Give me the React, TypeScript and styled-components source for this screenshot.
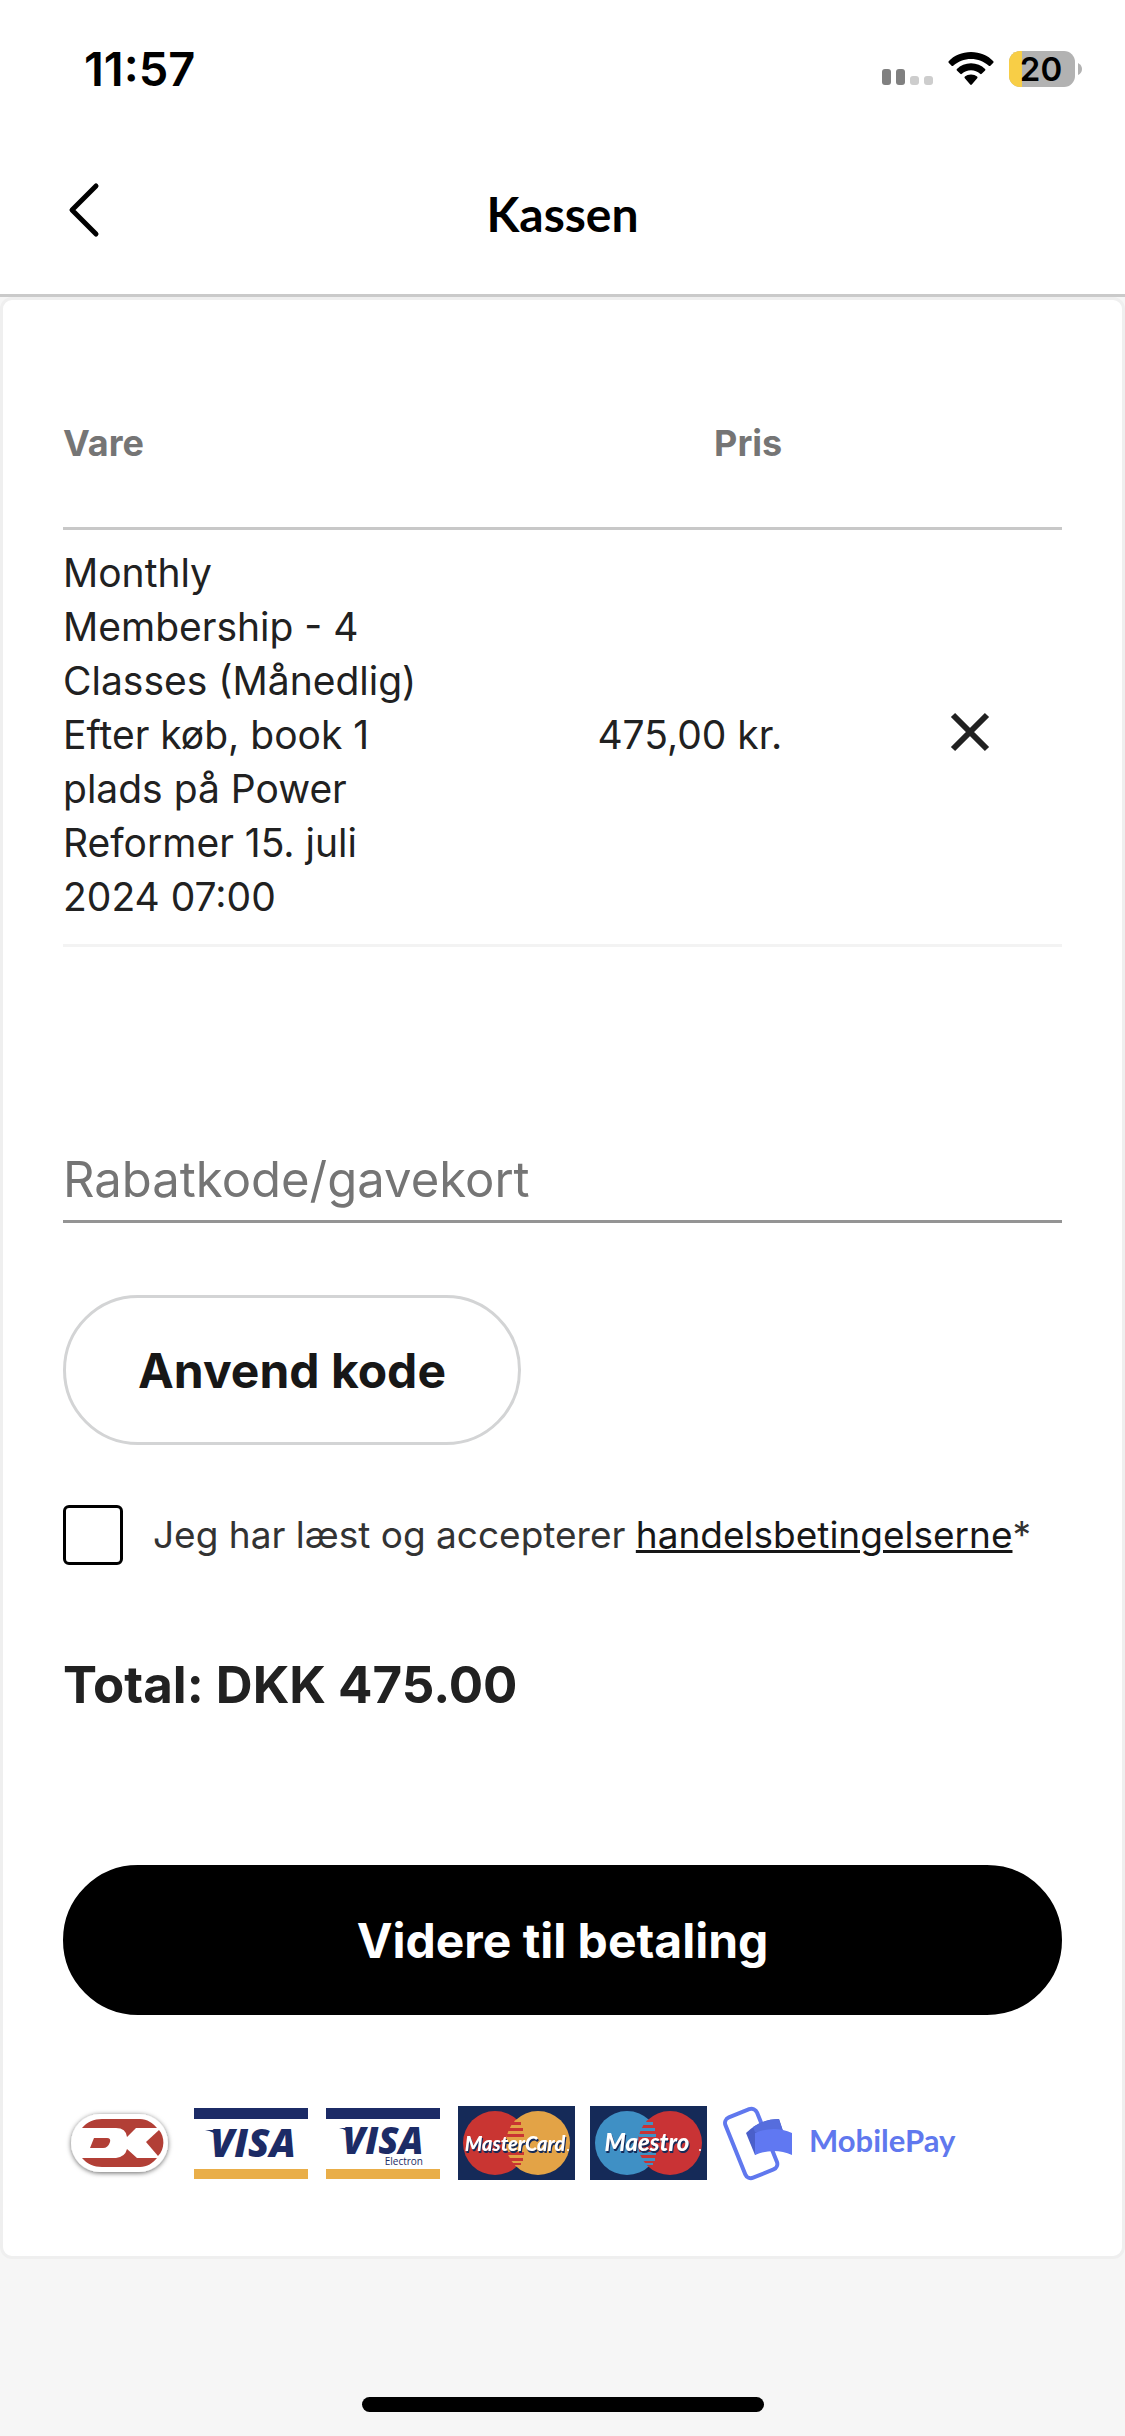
import React, { useState } from "react";
import styled, { createGlobalStyle } from "styled-components";

const GlobalStyle = createGlobalStyle`
  *, *::before, *::after { box-sizing: border-box; }
  body {
    margin: 0;
    background: #f6f6f6;
    color: #212121;
    font-family: Inter, "Liberation Sans", sans-serif;
  }
`;

const Page = styled.div`
  min-height: 100vh;
  display: flex;
  flex-direction: column;
`;

const Header = styled.header`
  background: #fff;
  border-bottom: 3px solid #cacaca;
`;

const StatusBar = styled.div`
  display: flex;
  align-items: center;
  justify-content: space-between;
  height: 138px;
  padding: 0 43px 0 84px;
  color: #000;
`;

const Time = styled.time`
  font-size: 47px;
  line-height: 52px;
  font-weight: 600;
`;

const StatusIcons = styled.div`
  display: flex;
  align-items: center;
  gap: 15px;
`;

const NavBar = styled.nav`
  display: grid;
  grid-template-columns: 1fr auto 1fr;
  align-items: start;
  padding: 40px 60px 44px;
  color: #000;
`;

const BackButton = styled.button`
  display: flex;
  justify-self: start;
  padding: 4px 6px;
  border: 0;
  background: none;
  color: inherit;
`;

const Title = styled.h1`
  margin: 0;
  font-family: Lato, "Liberation Sans", sans-serif;
  font-size: 48px;
  line-height: 72px;
  font-weight: 700;
`;

const Card = styled.main`
  padding: 98px 60px 75px;
  background: #fff;
  border: 3px solid #efefef;
  border-radius: 12px;
`;

const CartTable = styled.table`
  width: 100%;
  border-collapse: collapse;
  table-layout: fixed;
`;

const HeadCell = styled.th<{ $width: string; $end?: boolean }>`
  width: ${(p) => p.$width};
  padding: 18px 0 57px;
  border-bottom: 3px solid #c8c8c8;
  color: #757575;
  font-size: 36px;
  line-height: 54px;
  font-weight: 700;
  text-align: ${(p) => (p.$end ? "right" : "left")};
`;

const Cell = styled.td<{ $end?: boolean }>`
  padding: 16px 0 20px;
  border-bottom: 3px solid #f3f3f3;
  font-size: 39px;
  line-height: 54px;
  text-align: ${(p) => (p.$end ? "right" : "left")};
`;

const RemoveButton = styled.button`
  display: flex;
  margin: 0 69px 0 auto;
  padding: 0;
  border: 0;
  background: none;
  color: #212121;
`;

const DiscountForm = styled.form`
  display: flex;
  flex-direction: column;
  align-items: flex-start;
  gap: 72px;
  margin-top: 192px;
`;

const CodeInput = styled.input`
  width: 100%;
  height: 84px;
  padding: 0;
  border: 0;
  border-bottom: 3px solid #949494;
  border-radius: 0;
  background: none;
  color: #212121;
  font-family: inherit;
  font-size: 49px;

  &::placeholder {
    color: #757575;
    opacity: 1;
  }
`;

const PillButton = styled.button<{ $primary?: boolean }>`
  width: ${(p) => (p.$primary ? "100%" : "auto")};
  height: 150px;
  padding: 0 72px;
  border: 3px solid ${(p) => (p.$primary ? "#000" : "#d3d4d5")};
  border-radius: 75px;
  background: ${(p) => (p.$primary ? "#000" : "#fff")};
  color: ${(p) => (p.$primary ? "#fff" : "#171717")};
  font-family: inherit;
  font-size: 48px;
  font-weight: 700;
`;

const Terms = styled.div`
  display: flex;
  align-items: center;
  gap: 30px;
  margin-top: 60px;
`;

const Checkbox = styled.input`
  appearance: none;
  flex: none;
  width: 60px;
  height: 60px;
  margin: 0;
  border: 3px solid #000;
  border-radius: 6px;
  background: #fff;

  &:checked {
    background: #000;
    box-shadow: inset 0 0 0 9px #fff;
  }
`;

const TermsLabel = styled.label`
  color: #333;
  font-size: 37px;
  line-height: 54px;
`;

const TermsLink = styled.a`
  color: #171717;
  text-decoration-thickness: 3px;
`;

const Total = styled.p`
  margin: 84px 0 144px;
  font-size: 51px;
  line-height: 72px;
  font-weight: 700;
`;

const Logos = styled.ul`
  display: flex;
  align-items: center;
  gap: 15px;
  margin: 90px 0 0;
  padding: 0;
  list-style: none;
`;

const LogoItem = styled.li`
  display: flex;
`;

const BrandName = styled.text`
  font-family: Lato, "Liberation Sans", sans-serif;
  font-weight: 900;
  font-style: italic;
  fill: #fff;
  filter: drop-shadow(1px 2px 0 #152a58);
`;

const HomeIndicator = styled.div`
  width: 402px;
  height: 15px;
  margin: auto auto 24px;
  border-radius: 8px;
  background: #000;
`;

const Signal = () => (
  <svg width="51" height="34" viewBox="0 0 51 34" aria-hidden="true">
    <rect x="0" y="17" width="9" height="16" rx="3" fill="#808080" />
    <rect x="14" y="17" width="9" height="16" rx="3" fill="#808080" />
    <rect x="28" y="24" width="9" height="9" rx="3" fill="#cdcdcd" />
    <rect x="42" y="24" width="9" height="9" rx="3" fill="#cdcdcd" />
  </svg>
);

const Wifi = () => (
  <svg width="46" height="34" viewBox="0 0 46 34" aria-hidden="true">
    <path d="M23 0C14 0 6 3.500 .7 9.200Q0 10 .7 10.800L3.600 13.700Q4.400 14.400 5.200 13.700C10 9.300 16.200 6.900 23 6.900S36 9.300 40.800 13.700Q41.600 14.400 42.400 13.700L45.300 10.800Q46 10 45.300 9.200C40 3.500 32 0 23 0Z" />
    <path d="M23 11.200C17.500 11.200 12.500 13.300 8.900 16.900Q8.200 17.700 8.900 18.500L12.300 21.800Q13.100 22.500 13.900 21.800C16.400 19.600 19.500 18.200 23 18.200S29.600 19.600 32.100 21.800Q32.900 22.500 33.700 21.800L37.100 18.500Q37.800 17.700 37.100 16.900C33.500 13.300 28.500 11.200 23 11.200Z" />
    <path d="M23 22.500C20.500 22.500 18.500 23.300 16.900 24.600Q16 25.400 16.800 26.200L22.200 32.500Q23 33.300 23.800 32.500L29.200 26.200Q30 25.400 29.100 24.600C27.500 23.300 25.500 22.500 23 22.500Z" />
  </svg>
);

const Battery = () => (
  <svg width="73" height="48" viewBox="0 -6 73 48" role="img" aria-label="20 procent">
    <clipPath id="cell">
      <rect width="66" height="36" rx="11" />
    </clipPath>
    <g clipPath="url(#cell)">
      <rect width="66" height="36" fill="#b2b2b2" />
      <rect width="13" height="36" fill="#f8ce46" />
    </g>
    <path d="M69 12Q73 14 73 18T69 24Z" fill="#b2b2b2" />
    <text x="32" y="30" textAnchor="middle" fontFamily="Inter, sans-serif" fontSize="33" fontWeight="600">
      20
    </text>
  </svg>
);

const Dankort = () => (
  <svg width="116" height="76" viewBox="0 0 116 76" role="img" aria-label="Dankort">
    <defs>
      <filter id="halo" x="-20%" y="-20%" width="140%" height="140%">
        <feDropShadow dx="0" dy="1" stdDeviation="2.500" floodColor="#000" floodOpacity=".6" />
      </filter>
    </defs>
    <rect x="8" y="9" width="97" height="58" rx="29" fill="#fff" filter="url(#halo)" />
    <g fill="#b23f36">
      <path d="M19 23C24 17 31 14 39 14H77C84 14 90 18 94 23H73L64 32Q63 23 53 23Z" />
      <path d="M19 53H53Q62 52 64 44L74 53H94C90 58 84 62 77 62H39C31 62 24 59 19 53Z" />
      <path d="M31 33H44Q48 33 47 37Q45 43 40 43H27Z" />
      <path d="M96 25C102 32 102 44 95 51L83 37Z" />
    </g>
  </svg>
);

const logoFont = '"Open Sans", "Noto Sans", sans-serif';

const Visa = ({ electron }: { electron?: boolean }) => (
  <svg
    width="117"
    height="76"
    viewBox="0 0 117 76"
    role="img"
    aria-label={electron ? "Visa Electron" : "Visa"}
  >
    <rect y="3" width="114" height="11" fill="#1c2b66" />
    <rect y="64" width="114" height="10" fill="#e9ae49" />
    <text
      x={electron ? 57 : 59}
      y={electron ? 49 : 52}
      textAnchor="middle"
      fontFamily={logoFont}
      fontSize={electron ? 37 : 39}
      fontWeight="800"
      fontStyle="italic"
      fill="#1c2b66"
    >
      VISA
    </text>
    <path d={electron ? "M13 23H25L26 32Q21 24 13 23Z" : "M11 25H25L26 34Q20 26 11 25Z"} fill="#1c2b66" />
    {electron && (
      <text x="97" y="60" textAnchor="end" fontFamily={logoFont} fontSize="10" fill="#1c2b66">
        Electron
      </text>
    )}
  </svg>
);

interface CirclesProps {
  name: string;
  left: string;
  right: string;
  stripes: string;
  size: number;
}

const CirclesCard = ({ name, left, right, stripes, size }: CirclesProps) => (
  <svg width="117" height="76" viewBox="0 0 117 76" role="img" aria-label={name}>
    <rect y="1" width="117" height="74" fill="#152a58" />
    <circle cx="37" cy="38" r="32" fill={left} />
    <circle cx="80" cy="38" r="32" fill={right} />
    <g fill={stripes}>
      <rect x="53" y="17" width="10" height="3" />
      <rect x="50" y="23" width="15" height="3" />
      <rect x="49" y="29" width="17" height="3" />
      <rect x="49" y="47" width="17" height="3" />
      <rect x="50" y="53" width="15" height="3" />
      <rect x="53" y="58" width="10" height="2" />
    </g>
    <BrandName x="57" y="46" textAnchor="middle" fontSize={size}>{name}</BrandName>
    <circle cx="110" cy="45" r="1" fill="#fff" />
  </svg>
);

const MobilePay = () => (
  <svg width="240" height="76" viewBox="0 0 240 76" role="img" aria-label="MobilePay">
    <rect
      x="12"
      y="6"
      width="34"
      height="65"
      rx="6"
      transform="rotate(-22 29 38)"
      fill="#fff"
      stroke="#6078ee"
      strokeWidth="4"
    />
    <path d="M24 28Q38 14 57 14L62 29L33 50Z" fill="#4a5fca" />
    <path d="M31 22Q43 14 57 14L62 29L33 27Z" fill="#566ddd" />
    <path d="M33 28Q52 20 70 28V50Q52 42 33 50Z" fill="#6078f2" />
    <text x="87" y="47" fontFamily={'Lato, "Liberation Sans", sans-serif'} fontSize="31" fontWeight="700" fill="#6078ee">
      MobilePay
    </text>
  </svg>
);

export default function App() {
  const [code, setCode] = useState("");
  const [accepted, setAccepted] = useState(false);

  return (
    <>
      <GlobalStyle />
      <Page>
        <Header>
          <StatusBar>
            <Time>11:57</Time>
            <StatusIcons>
              <Signal />
              <Wifi />
              <Battery />
            </StatusIcons>
          </StatusBar>
          <NavBar>
            <BackButton type="button" aria-label="Tilbage">
              <svg width="36" height="56" viewBox="0 0 36 56" fill="none" stroke="currentColor" strokeWidth="5" strokeLinecap="round" strokeLinejoin="round">
                <path d="M30 4L6 28L30 52" />
              </svg>
            </BackButton>
            <Title>Kassen</Title>
          </NavBar>
        </Header>

        <Card>
          <CartTable>
            <thead>
              <tr>
                <HeadCell $width="38%">Vare</HeadCell>
                <HeadCell $width="34%" $end>Pris</HeadCell>
                <HeadCell $width="28%" aria-label="Fjern" />
              </tr>
            </thead>
            <tbody>
              <tr>
                <Cell>
                  Monthly Membership - 4 Classes (Månedlig) Efter køb, book 1 plads på Power Reformer 15. juli 2024 07:00
                </Cell>
                <Cell $end>475,00 kr.</Cell>
                <Cell>
                  <RemoveButton type="button" aria-label="Fjern vare">
                    <svg width="46" height="46" viewBox="0 0 46 46" fill="none" stroke="currentColor" strokeWidth="6">
                      <path d="M6 3L40 37M40 3L6 37" />
                    </svg>
                  </RemoveButton>
                </Cell>
              </tr>
            </tbody>
          </CartTable>

          <DiscountForm onSubmit={(e) => e.preventDefault()}>
            <CodeInput
              type="text"
              aria-label="Rabatkode/gavekort"
              placeholder="Rabatkode/gavekort"
              value={code}
              onChange={(e) => setCode(e.target.value)}
            />
            <PillButton type="submit">Anvend kode</PillButton>
          </DiscountForm>

          <Terms>
            <Checkbox
              id="terms"
              type="checkbox"
              checked={accepted}
              onChange={(e) => setAccepted(e.target.checked)}
            />
            <TermsLabel htmlFor="terms">
              Jeg har læst og accepterer <TermsLink href="#handelsbetingelser">handelsbetingelserne</TermsLink>*
            </TermsLabel>
          </Terms>

          <Total>Total: DKK 475.00</Total>

          <PillButton type="button" $primary>Videre til betaling</PillButton>

          <Logos>
            <LogoItem><Dankort /></LogoItem>
            <LogoItem><Visa /></LogoItem>
            <LogoItem><Visa electron /></LogoItem>
            <LogoItem><CirclesCard name="MasterCard" left="#c93532" right="#e3a346" stripes="#c93532" size={20} /></LogoItem>
            <LogoItem><CirclesCard name="Maestro" left="#3f90c5" right="#c93335" stripes="#3f90c5" size={24} /></LogoItem>
            <LogoItem><MobilePay /></LogoItem>
          </Logos>
        </Card>

        <HomeIndicator />
      </Page>
    </>
  );
}
